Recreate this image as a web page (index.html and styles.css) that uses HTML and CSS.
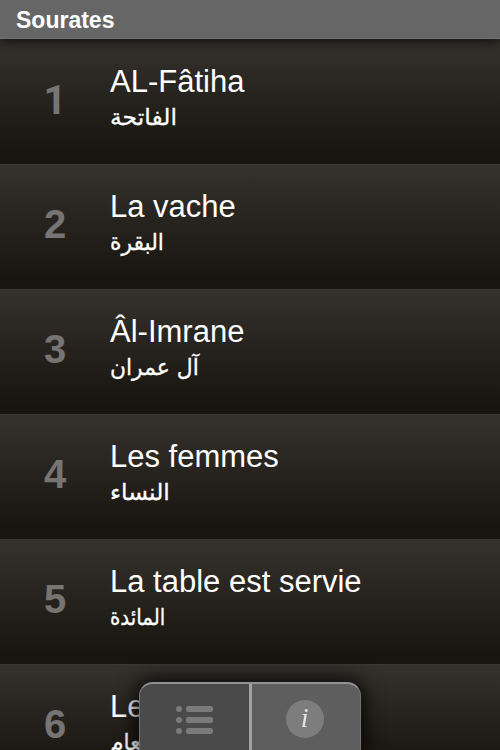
FILE: index.html
```html
<!DOCTYPE html>
<html lang="fr">
<head>
  <meta charset="UTF-8" />
  <meta name="viewport" content="width=device-width, initial-scale=1.0"/>
  <title>Sourates</title>
  <link rel="stylesheet" href="styles.css">
</head>
<body>
  <div class="header">Sourates</div>

  <div class="list">
    <div class="row">
      <div class="number one">1</div>
      <div class="names">
        <div class="title">AL-Fâtiha</div>
        <div class="arabic"><span class="wide" lang="ar">الفاتحة</span></div>
      </div>
    </div>
    <div class="row">
      <div class="number">2</div>
      <div class="names">
        <div class="title">La vache</div>
        <div class="arabic"><span class="narrow" lang="ar">البقرة</span></div>
      </div>
    </div>
    <div class="row">
      <div class="number">3</div>
      <div class="names">
        <div class="title">Âl-Imrane</div>
        <div class="arabic"><span class="narrow" lang="ar">آل عمران</span></div>
      </div>
    </div>
    <div class="row">
      <div class="number">4</div>
      <div class="names">
        <div class="title">Les femmes</div>
        <div class="arabic"><span class="wide" lang="ar">النساء</span></div>
      </div>
    </div>
    <div class="row">
      <div class="number">5</div>
      <div class="names">
        <div class="title">La table est servie</div>
        <div class="arabic"><span class="narrower" lang="ar">المائدة</span></div>
      </div>
    </div>
    <div class="row">
      <div class="number">6</div>
      <div class="names">
        <div class="title">Le</div>
        <div class="arabic"><span class="narrow" lang="ar">الأنعام</span></div>
      </div>
    </div>
  </div>

  <div class="tabs">
    <div class="tab selected">
      <svg width="40" height="30" viewBox="0 0 40 30" fill="#7b7b7b">
        <circle cx="5" cy="4" r="3"/>
        <circle cx="5" cy="15" r="3"/>
        <circle cx="5" cy="26" r="3"/>
        <rect x="12" y="1" width="27" height="6" rx="2.5"/>
        <rect x="12" y="12" width="27" height="6" rx="2.5"/>
        <rect x="12" y="23" width="27" height="6" rx="2.5"/>
      </svg>
    </div>
    <div class="tab">
      <div class="info">i</div>
    </div>
  </div>
</body>
</html>
```
FILE: styles.css
```css
body {
  margin: 0;
  height: 750px;
  overflow: hidden;
  background: #1a1610;
  color: #fff;
  font-family: "Liberation Sans", Arial, sans-serif;
}
.header {
  position: relative;
  height: 39px;
  box-sizing: border-box;
  padding-left: 16px;
  background: #666;
  border-bottom: 1px solid #727272;
  box-shadow: 0 1px 12px 1px rgba(0,0,0,0.8);
  font-size: 23px;
  font-weight: bold;
  line-height: 40px;
}
.list {
  height: 711px;
  overflow: hidden;
}
.row {
  display: flex;
  height: 125px;
  box-sizing: border-box;
  border-top: 1px solid #393633;
  background: linear-gradient(#35322e, #18140e 92%);
}
.row:last-child {
  height: 86px;
  background: linear-gradient(#35322e, #1c1812);
}
.number {
  width: 110px;
  box-sizing: border-box;
  padding-top: 36px;
  color: #777573;
  font-size: 40px;
  font-weight: bold;
  line-height: 46px;
  text-align: center;
}
.one {
  padding-top: 38px;
  font-family: Roboto, sans-serif;
}
.names {
  padding-top: 24px;
}
.title {
  font-size: 31px;
  line-height: 36px;
  white-space: nowrap;
}
.arabic {
  height: 34px;
  font-family: "DejaVu Sans", sans-serif;
  font-size: 23px;
  line-height: 34px;
  white-space: nowrap;
  -webkit-text-stroke: 0.3px #fff;
}
.arabic span {
  display: inline-block;
  transform-origin: left;
}
.row:last-child .arabic {
  height: 25px;
}
.wide {
  transform: scaleX(1.02);
}
.narrow {
  transform: scaleX(0.95);
}
.narrower {
  transform: scaleX(0.86);
}
.tabs {
  position: fixed;
  bottom: 0;
  left: 139px;
  display: flex;
  width: 222px;
  height: 68px;
  box-sizing: border-box;
  overflow: hidden;
  border: 1px solid #747474;
  border-top: 2px solid #929292;
  border-bottom: 0;
  border-radius: 14px 14px 0 0;
  background: #5e5e5e;
  box-shadow: 0 0 20px 3px rgba(0,0,0,0.85);
}
.tab {
  display: flex;
  flex: 1;
  align-items: center;
  justify-content: center;
  padding-top: 5px;
}
.selected {
  background: #4a4a4a;
  border-right: 3px solid #a2a2a2;
}
.info {
  width: 38px;
  height: 38px;
  margin: 0 2px 1px 0;
  border-radius: 50%;
  background: #7d7d7d;
  color: #e4e4e4;
  font-family: "Liberation Serif", serif;
  font-size: 28px;
  font-style: italic;
  line-height: 36px;
  text-align: center;
}
```
